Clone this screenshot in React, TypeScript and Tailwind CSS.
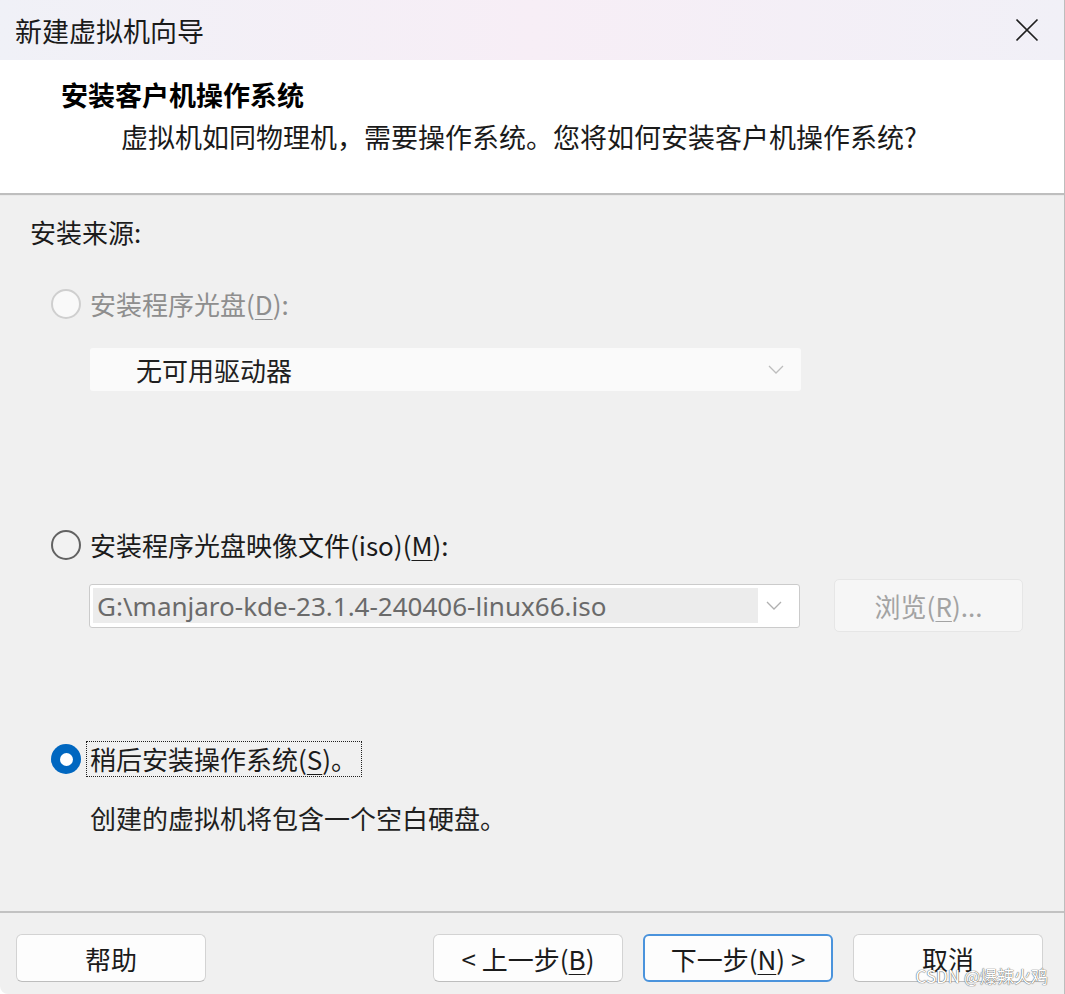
import React from 'react'

const CJK = 'font-["Noto_Sans_CJK_SC","Noto_Sans",sans-serif]'

// ── Small pieces ─────────────────────────────────────────────────────────────

function Radio({ state }: { state: 'disabled' | 'off' | 'on' }) {
  if (state === 'on') {
    return (
      <span className="flex h-[30px] w-[30px] shrink-0 items-center justify-center rounded-full bg-[#0067c0]">
        <span className="h-[13px] w-[13px] rounded-full bg-white" />
      </span>
    )
  }
  return (
    <span
      className={
        state === 'disabled'
          ? 'h-[30px] w-[30px] shrink-0 rounded-full border-2 border-[#cfcfcf] bg-[#f9f9f9]'
          : 'h-[30px] w-[30px] shrink-0 rounded-full border-2 border-[#626262] bg-[#f2f2f2]'
      }
    />
  )
}

function Chevron({ color }: { color: string }) {
  return (
    <svg width="16" height="9" viewBox="0 0 16 9" fill="none">
      <polyline points="1,1 8,8 15,1" stroke={color} strokeWidth="1.3" />
    </svg>
  )
}

function Key({ k }: { k: string }) {
  return <span className="underline decoration-1 underline-offset-[4px]">{k}</span>
}

function FooterButton({
  children,
  primary = false,
}: {
  children: React.ReactNode
  primary?: boolean
}) {
  return (
    <button
      className={
        primary
          ? 'flex h-[48px] w-[190px] items-center justify-center rounded-[6px] border-2 border-[#4a93dc] bg-[#fdfdfd] text-[26px] text-[#1b1b1b]'
          : 'flex h-[48px] w-[190px] items-center justify-center rounded-[6px] border border-[#d3d3d3] border-b-[#bdbdbd] bg-[#fdfdfd] text-[26px] text-[#1b1b1b]'
      }
    >
      {children}
    </button>
  )
}

// ── Dialog ───────────────────────────────────────────────────────────────────

export default function App() {
  return (
    <div
      className={`${CJK} relative flex h-[994px] w-[1065px] flex-col overflow-hidden rounded-bl-[8px] border-r border-[#bdbdbd] bg-[#f0f0f0]`}
    >
      {/* Title bar */}
      <div className="flex h-[60px] shrink-0 items-center justify-between bg-gradient-to-r from-[#f0f1f7] via-[#f7eef6] to-[#f1f0f7] pl-[15px] pr-[25px]">
        <span className="text-[27px] leading-none text-[#1a1a1a]">新建虚拟机向导</span>
        <svg width="24" height="24" viewBox="0 0 24 24" fill="none">
          <path d="M1.5 1.5 L22.5 22.5 M22.5 1.5 L1.5 22.5" stroke="#1f1f1f" strokeWidth="1.7" />
        </svg>
      </div>

      {/* Header */}
      <div className="flex h-[133px] shrink-0 flex-col bg-white pt-[17px]">
        <div className="pl-[61px] text-[27px] font-bold leading-[36px] text-black">安装客户机操作系统</div>
        <div className="mt-[6px] pl-[121px] text-[27px] leading-[36px] text-[#1a1a1a]">
          虚拟机如同物理机，需要操作系统。您将如何安装客户机操作系统?
        </div>
      </div>
      <div className="h-[3px] shrink-0 border-t-2 border-[#bebebe] bg-[#e9e9e9]" />

      {/* Body */}
      <div className="flex flex-1 flex-col pl-[30px] pt-[18px] text-[26px] leading-[36px]">
        <div className="text-[#1b1b1b]">安装来源:</div>

        <div className="mt-[36px] flex items-center gap-[9px] pl-[21px]">
          <Radio state="disabled" />
          <span className="text-[#8e8e8e]">
            安装程序光盘(<Key k="D" />):
          </span>
        </div>

        <div className="ml-[60px] mt-[26px] flex h-[43px] w-[711px] items-center justify-between rounded-[3px] bg-[#fafafa] pl-[46px] pr-[17px]">
          <span className="text-[#1f1f1f]">无可用驱动器</span>
          <Chevron color="#bdbdbd" />
        </div>

        <div className="mt-[136px] flex items-center gap-[9px] pl-[21px]">
          <Radio state="off" />
          <span className="text-[#1b1b1b]">
            安装程序光盘映像文件(iso)(<Key k="M" />):
          </span>
        </div>

        <div className="mt-[16px] flex h-[53px] items-center">
          <div className="ml-[59px] flex h-[44px] w-[711px] items-center rounded-[3px] border border-[#cbcbcb] bg-white pl-[3px] pr-[17px]">
            <div className="flex h-[35px] w-[665px] items-center bg-[#ececec] pl-[4px] font-['Noto_Sans','Open_Sans',sans-serif] text-[26px] text-[#6a6a6a]">
              G:\manjaro-kde-23.1.4-240406-linux66.iso
            </div>
            <span className="ml-auto">
              <Chevron color="#b0b0b0" />
            </span>
          </div>
          <div className="ml-[34px] flex h-[53px] w-[189px] items-center justify-center rounded-[5px] border border-[#e6e6e6] bg-[#f6f6f6] text-[26px] text-[#a3a3a3]">
            浏览(<Key k="R" />)...
          </div>
        </div>

        <div className="mt-[109px] flex items-center gap-[5px] pl-[21px]">
          <Radio state="on" />
          <span className="border border-dotted border-[#202020] pl-[3px] pr-[4px] leading-[34px] text-[#1b1b1b]">
            稍后安装操作系统(<Key k="S" />)。
          </span>
        </div>

        <div className="mt-[23px] pl-[60px] text-[#1f1f1f]">创建的虚拟机将包含一个空白硬盘。</div>
      </div>

      {/* Footer */}
      <div className="h-[2px] shrink-0 bg-[#c2c2c2]" />
      <div className="flex h-[81px] shrink-0 items-start justify-between pl-[16px] pr-[21px] pt-[21px]">
        <FooterButton>帮助</FooterButton>
        <div className="flex gap-[20px]">
          <FooterButton>
            &lt; 上一步(<Key k="B" />)
          </FooterButton>
          <FooterButton primary>
            下一步(<Key k="N" />) &gt;
          </FooterButton>
          <FooterButton>取消</FooterButton>
        </div>
      </div>

      {/* Watermark */}
      <div className="absolute bottom-[10px] right-[16px] text-[17px] leading-none text-white [text-shadow:0_0_1px_#555,0_0_1px_#555]">
        CSDN @爆辣火鸡
      </div>
    </div>
  )
}
